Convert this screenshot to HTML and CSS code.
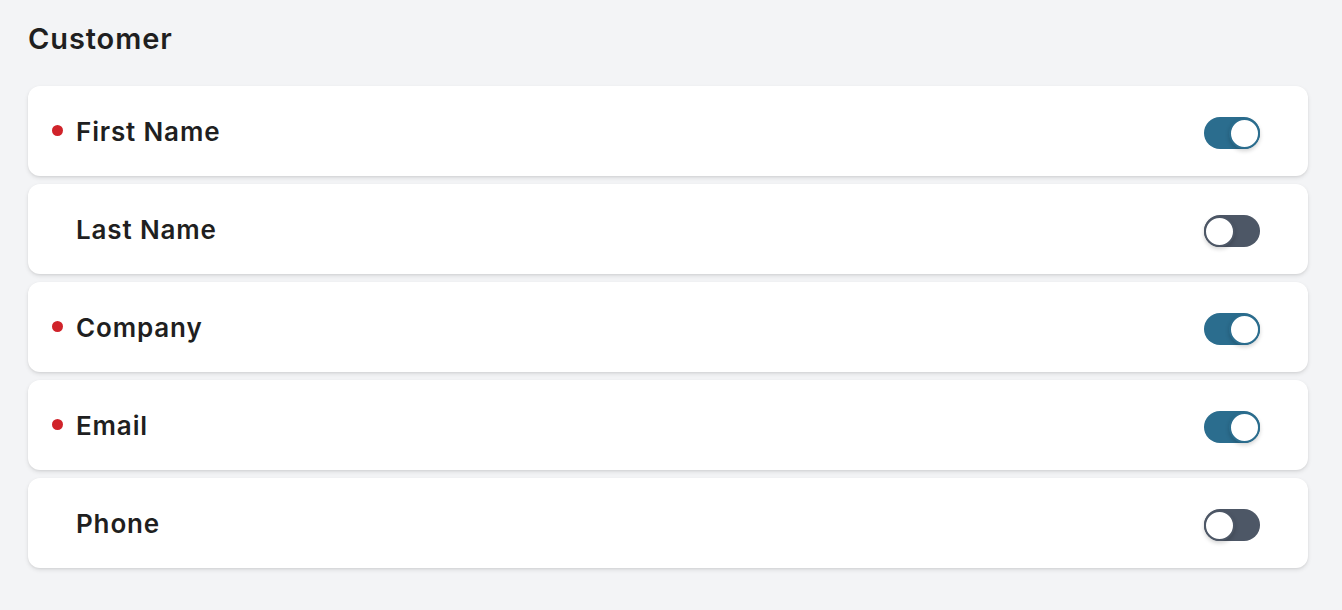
FILE: index.html
```html
<!DOCTYPE html>
<html lang="en">
<head>
  <meta charset="UTF-8" />
  <meta name="viewport" content="width=device-width, initial-scale=1.0"/>
  <title>Customer fields</title>
  <link rel="stylesheet" href="styles.css">
</head>
<body>
  <main class="page">
    <h2 class="section-title">Customer</h2>
    <ul class="field-list">
      <li class="field-row">
        <span class="field-name required">First Name</span>
        <span class="toggle on"><span class="knob"></span></span>
      </li>
      <li class="field-row">
        <span class="field-name">Last Name</span>
        <span class="toggle"><span class="knob"></span></span>
      </li>
      <li class="field-row">
        <span class="field-name required">Company</span>
        <span class="toggle on"><span class="knob"></span></span>
      </li>
      <li class="field-row">
        <span class="field-name required">Email</span>
        <span class="toggle on"><span class="knob"></span></span>
      </li>
      <li class="field-row">
        <span class="field-name">Phone</span>
        <span class="toggle"><span class="knob"></span></span>
      </li>
    </ul>
  </main>
</body>
</html>
```

FILE: styles.css
```css
html, body {
  margin: 0;
  background: #f3f4f6;
  font-family: Inter, "Noto Sans", sans-serif;
  color: #1f1f21;
}
.page {
  padding: 21px 28px;
  max-width: 1280px;
}
.section-title {
  margin: 0 0 29px;
  font-size: 29px;
  font-weight: 600;
  line-height: 36px;
  letter-spacing: 0.9px;
}
.field-list {
  list-style: none;
  margin: 0;
  padding: 0;
  display: flex;
  flex-direction: column;
  gap: 8px;
}
.field-row {
  height: 90px;
  box-sizing: border-box;
  padding: 0 48px;
  display: flex;
  align-items: center;
  justify-content: space-between;
  background: #fff;
  border-radius: 12px;
  box-shadow: 0 2px 4px rgba(0, 0, 0, 0.1), 0 1px 2px rgba(0, 0, 0, 0.05);
}
.field-name {
  position: relative;
  font-size: 26px;
  font-weight: 600;
  letter-spacing: 0.85px;
}
.field-name.required::before {
  content: '';
  position: absolute;
  left: -24px;
  top: 50%;
  width: 11px;
  height: 11px;
  margin-top: -6px;
  border-radius: 50%;
  background: #d0232a;
}
.toggle {
  width: 56px;
  height: 32px;
  margin-top: 4px;
  box-sizing: border-box;
  border-radius: 16px;
  background: #4d5766;
  display: flex;
  align-items: center;
  justify-content: flex-start;
}
.toggle.on {
  background: #2b6d8e;
  justify-content: flex-end;
}
.knob {
  width: 31px;
  height: 31px;
  box-sizing: border-box;
  border-radius: 50%;
  background: #fff;
  border: 2px solid #4d5766;
  box-shadow: 0 2px 4px rgba(0, 0, 0, 0.18);
}
.toggle.on .knob {
  border-color: #2b6d8e;
}
```
